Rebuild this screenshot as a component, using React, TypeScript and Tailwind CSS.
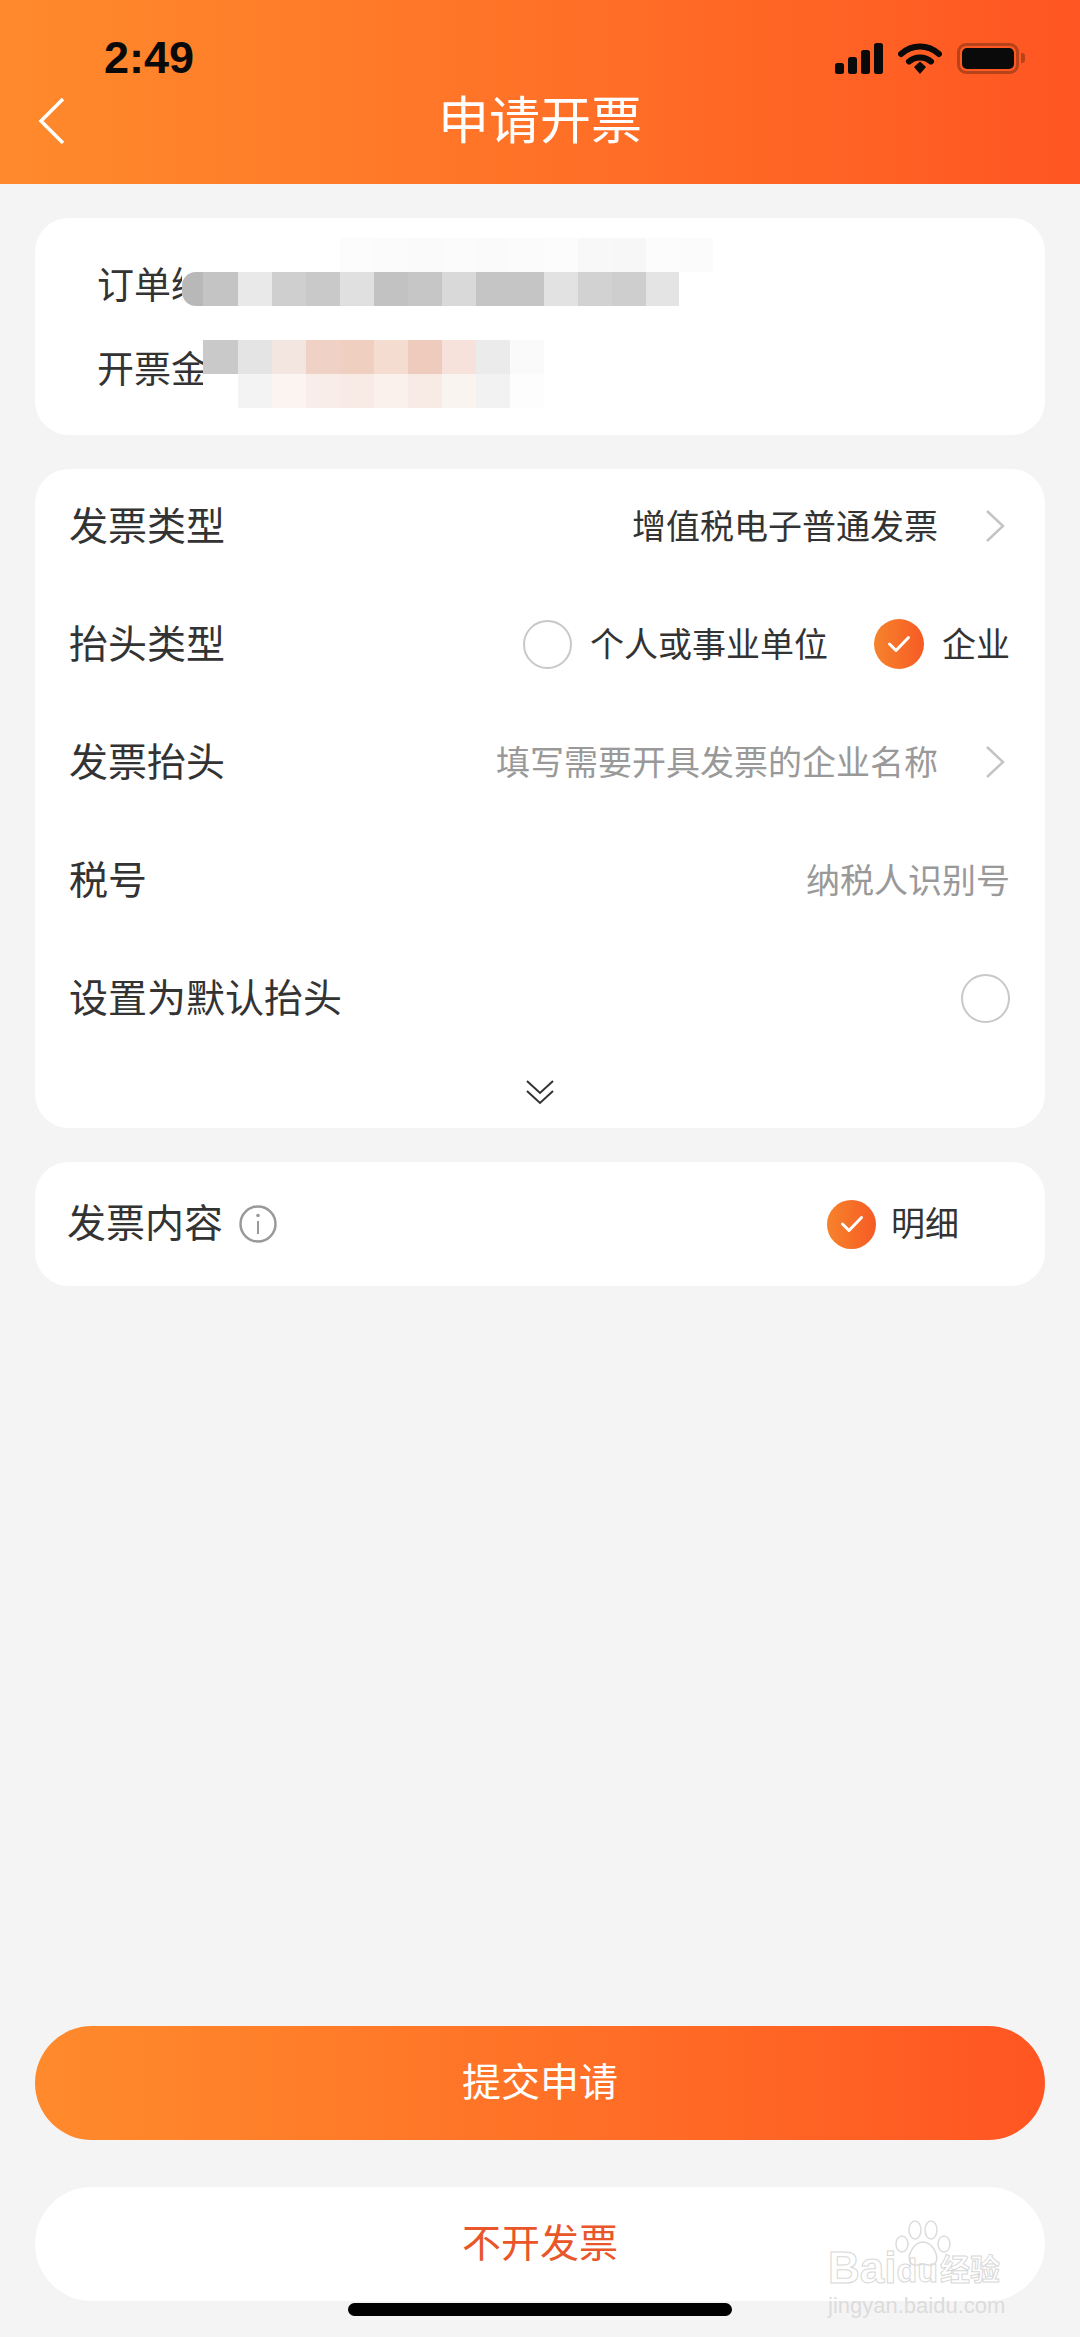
const FONT = "font-['Liberation_Sans','Noto_Sans_CJK_SC',sans-serif]";

const orderMosaic = [
  "w-[35px] bg-[#c4c4c4]", "w-[34px] bg-[#e9e9e9]", "w-[34px] bg-[#cfcfcf]", "w-[34px] bg-[#c9c9c9]",
  "w-[34px] bg-[#e0e0e0]", "w-[34px] bg-[#c2c2c2]", "w-[34px] bg-[#c6c6c6]", "w-[34px] bg-[#d9d9d9]",
  "w-[68px] bg-[#c5c5c5]", "w-[34px] bg-[#e2e2e2]", "w-[34px] bg-[#d2d2d2]", "w-[34px] bg-[#cecece]",
  "w-[33px] bg-[#e4e4e4]",
];

const orderFaint = [
  "w-[137px] bg-[#ffffff]", "w-[34px] bg-[#fcfcfc]", "w-[34px] bg-[#fbfbfb]", "w-[34px] bg-[#fafafa]",
  "w-[34px] bg-[#fbfbfb]", "w-[34px] bg-[#fafafa]", "w-[34px] bg-[#fbfbfb]",
  "w-[34px] bg-[#fcfcfc]", "w-[34px] bg-[#f8f8f8]", "w-[34px] bg-[#f7f7f7]", "w-[34px] bg-[#fcfcfc]",
  "w-[33px] bg-[#fbfbfb]",
];

const amountTop = [
  "w-[35px] bg-[#c9c9c9]", "w-[34px] bg-[#e4e4e4]", "w-[34px] bg-[#f3e6e0]", "w-[34px] bg-[#efd2c5]",
  "w-[34px] bg-[#eecfc0]", "w-[34px] bg-[#f4dcd1]", "w-[34px] bg-[#eecbbc]", "w-[34px] bg-[#f6e2da]",
  "w-[34px] bg-[#ebebeb]", "w-[34px] bg-[#fafafa]",
];

const amountBottom = [
  "w-[35px] bg-[#ffffff]", "w-[34px] bg-[#f3f3f3]", "w-[34px] bg-[#fbf4f0]", "w-[34px] bg-[#f8ede8]",
  "w-[34px] bg-[#f8ebe5]", "w-[34px] bg-[#faf0ec]", "w-[34px] bg-[#f8ebe6]", "w-[34px] bg-[#faf4f1]",
  "w-[34px] bg-[#f2f2f2]", "w-[34px] bg-[#fdfdfd]",
];

function MosaicRow({ cells }: { cells: string[] }) {
  return (
    <div className="flex h-[34px]">
      {cells.map((c, i) => (
        <div key={i} className={c} />
      ))}
    </div>
  );
}

function StatusIcons() {
  return (
    <div className="flex items-center">
      <svg width="48" height="31" viewBox="0 0 48 31" className="mr-[15px]">
        <rect x="0" y="20" width="9" height="11" rx="2.5" fill="#0a0a0a" />
        <rect x="13" y="14" width="9" height="17" rx="2.5" fill="#0a0a0a" />
        <rect x="26" y="7" width="9" height="24" rx="2.5" fill="#0a0a0a" />
        <rect x="39" y="0" width="9" height="31" rx="2.5" fill="#0a0a0a" />
      </svg>
      <svg width="44" height="31" viewBox="0 0 44 31" className="mr-[15px]">
        <path d="M3 11 C14 1 30 1 41 11" fill="none" stroke="#0a0a0a" strokeWidth="6" strokeLinecap="round" />
        <path d="M11 18.5 C17 13 27 13 33 18.5" fill="none" stroke="#0a0a0a" strokeWidth="6" strokeLinecap="round" />
        <path d="M16 24 L22 18.5 L28 24 L22 31 Z" fill="#0a0a0a" />
      </svg>
      <div className="flex items-center">
        <div className="flex h-[31px] w-[62px] items-center justify-center rounded-[9px] border-[3px] border-[#b8431a]">
          <div className="h-[21px] w-[52px] rounded-[5px] bg-[#0a0a0a]" />
        </div>
        <div className="ml-[2px] h-[10px] w-[4px] rounded-r-[3px] bg-[#b8431a]" />
      </div>
    </div>
  );
}

function RadioChecked({ size }: { size: string }) {
  return (
    <span className={`flex shrink-0 items-center justify-center rounded-full bg-gradient-to-r from-[#f6822c] to-[#f65a24] ${size}`}>
      <svg width="26" height="22" viewBox="0 0 26 22" fill="none">
        <path d="M3.5 11 L10 17.5 L22.5 4.5" stroke="#fff" strokeWidth="3" strokeLinecap="round" strokeLinejoin="round" />
      </svg>
    </span>
  );
}

function RadioEmpty() {
  return <span className="block h-[49px] w-[49px] shrink-0 rounded-full border-[2px] border-[#c8c8c8]" />;
}

function ChevronRight() {
  return (
    <svg width="20" height="34" viewBox="0 0 20 34" fill="none" className="ml-[47px] mr-[5px]">
      <path d="M2 2 L18 17 L2 32" stroke="#c4c4c4" strokeWidth="2.5" />
    </svg>
  );
}

function FormRow({ label, children }: { label: string; children?: React.ReactNode }) {
  return (
    <div className="flex h-[112px] items-center justify-between">
      <span className="mt-[3px] text-[39px] text-[#333333]">{label}</span>
      <div className="flex items-center">{children}</div>
    </div>
  );
}

function Watermark() {
  return (
    <div className={`absolute left-[828px] top-[2220px] flex w-[195px] flex-col items-start ${FONT}`}>
      <div className="relative flex h-[70px] w-full items-end">
        <svg width="58" height="48" viewBox="0 0 58 48" fill="none" stroke="#dcdcdc" strokeWidth="1.5" className="absolute left-[66px] top-0">
          <ellipse cx="8" cy="24" rx="6" ry="8" />
          <ellipse cx="21" cy="10" rx="6" ry="9" />
          <ellipse cx="37" cy="10" rx="6" ry="9" />
          <ellipse cx="50" cy="24" rx="6" ry="8" />
          <path d="M29 22 C20 22 13 35 16 42 C20 48 26 44 29 44 C32 44 38 48 42 42 C45 35 38 22 29 22 Z" />
        </svg>
        <span className="text-[44px] font-bold leading-[44px] text-white [-webkit-text-stroke:1px_#d8d8d8]">Bai</span>
        <span className="text-[34px] font-bold leading-[40px] text-white [-webkit-text-stroke:1px_#d8d8d8]">du</span>
        <span className="ml-[2px] text-[30px] font-bold leading-[40px] text-white [-webkit-text-stroke:1px_#d8d8d8]">经验</span>
      </div>
      <span className="mt-[4px] text-[22px] leading-[24px] text-[#dcdcdc]">jingyan.baidu.com</span>
    </div>
  );
}

export default function App() {
  return (
    <div className={`relative flex h-[2337px] w-[1080px] flex-col overflow-hidden bg-[#f4f4f4] ${FONT}`}>
      <header className="h-[184px] bg-gradient-to-r from-[#ff8a2c] to-[#ff5522]">
        <div className="flex h-[92px] items-center justify-between pl-[104px] pr-[55px] pt-[24px]">
          <span className="text-[45px] font-bold text-[#0a0a0a]">2:49</span>
          <StatusIcons />
        </div>
        <div className="relative flex h-[60px] items-center justify-center">
          <svg width="28" height="48" viewBox="0 0 28 48" fill="none" className="absolute left-[38px] top-[5px]">
            <path d="M25 2 L3 24 L25 46" stroke="#fff" strokeWidth="3.5" />
          </svg>
          <h1 className="text-[51px] font-normal leading-[60px] text-white">申请开票</h1>
        </div>
      </header>

      <main className="flex flex-col px-[35px] pt-[34px]">
        <section className="relative h-[217px] rounded-[34px] bg-white pl-[62px] pt-[27px] text-[37px] leading-[84px] text-[#333333]">
          <div>订单编号</div>
          <div>开票金额</div>
          {/* mosaic that hides the order number */}
          <div className="absolute left-[147px] top-[20px] flex h-[80px] w-[533px] flex-col items-start rounded-l-[24px] bg-white pl-[21px]">
            <MosaicRow cells={orderFaint} />
            <MosaicRow cells={orderMosaic} />
          </div>
          <div className="absolute left-[147px] top-[54px] h-[34px] w-[21px] rounded-l-[14px] bg-[#b8b8b8]" />
          <div className="absolute left-[168px] top-[122px] flex flex-col rounded-bl-[30px] bg-white">
            <MosaicRow cells={amountTop} />
            <MosaicRow cells={amountBottom} />
          </div>
        </section>

        <section className="mt-[34px] h-[659px] rounded-[34px] bg-white pl-[34px] pr-[35px] pt-[1px]">
          <div className="flex flex-col gap-[6px]">
            <FormRow label="发票类型">
              <span className="mt-[3px] text-[34px] text-[#333333]">增值税电子普通发票</span>
              <ChevronRight />
            </FormRow>
            <FormRow label="抬头类型">
              <RadioEmpty />
              <span className="ml-[18px] mt-[3px] text-[34px] text-[#333333]">个人或事业单位</span>
              <span className="ml-[46px]">
                <RadioChecked size="h-[50px] w-[50px]" />
              </span>
              <span className="ml-[18px] mt-[3px] text-[34px] text-[#333333]">企业</span>
            </FormRow>
            <FormRow label="发票抬头">
              <span className="mt-[3px] text-[34px] text-[#999999]">填写需要开具发票的企业名称</span>
              <ChevronRight />
            </FormRow>
            <FormRow label="税号">
              <span className="mt-[3px] text-[34px] text-[#999999]">纳税人识别号</span>
            </FormRow>
            <FormRow label="设置为默认抬头">
              <RadioEmpty />
            </FormRow>
          </div>
          <div className="mt-[26px] flex justify-center">
            <svg width="28" height="25" viewBox="0 0 28 25" fill="none" stroke="#333333" strokeWidth="2">
              <path d="M1 1 L14 13 L27 1" />
              <path d="M1 11 L14 23 L27 11" />
            </svg>
          </div>
        </section>

        <section className="mt-[34px] flex h-[124px] items-center justify-between rounded-[34px] bg-white pl-[32px] pr-[86px]">
          <div className="flex items-center">
            <span className="text-[39px] text-[#333333]">发票内容</span>
            <svg width="38" height="38" viewBox="0 0 38 38" fill="none" className="ml-[16px]">
              <circle cx="19" cy="19" r="17.5" stroke="#999999" strokeWidth="2.5" />
              <circle cx="19" cy="10.5" r="1.8" fill="#999999" />
              <path d="M19 16 V29" stroke="#999999" strokeWidth="2" />
            </svg>
          </div>
          <div className="flex items-center">
            <RadioChecked size="h-[49px] w-[49px]" />
            <span className="ml-[15px] text-[34px] text-[#333333]">明细</span>
          </div>
        </section>
      </main>

      <footer className="mt-auto flex flex-col items-center px-[35px] pb-[21px]">
        <button className="h-[114px] w-full rounded-full bg-gradient-to-r from-[#ff8a2c] to-[#ff5522] text-[39px] text-white">
          提交申请
        </button>
        <button className="mt-[47px] h-[114px] w-full rounded-full bg-white text-[39px] text-[#e8562a]">
          不开发票
        </button>
        <div className="mt-[2px] h-[13px] w-[384px] rounded-full bg-black" />
      </footer>

      <Watermark />
    </div>
  );
}
